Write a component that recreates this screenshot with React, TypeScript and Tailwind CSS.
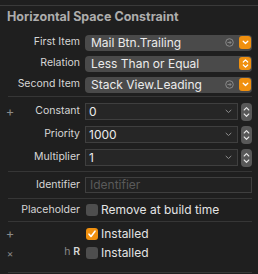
import React from "react";

const Sep = ({ full }: { full?: boolean }) => (
  <div className={full ? "h-px bg-[#3a3a3a]" : "h-px bg-[#363636] ml-[8px] mr-[6px]"} />
);

const CircleArrow = () => (
  <svg width="9" height="9" viewBox="0 0 9 9" className="shrink-0">
    <circle cx="4.5" cy="4.5" r="3.8" fill="none" stroke="#8a8a8a" strokeWidth="1" />
    <path d="M2.5 4.5h3.5M4.6 3l1.5 1.5-1.5 1.5" fill="none" stroke="#8a8a8a" strokeWidth="0.9" />
  </svg>
);

const OrangeDown = () => (
  <div className="w-[12px] h-[13px] rounded-[3px] bg-[#f0900f] flex items-center justify-center shrink-0">
    <svg width="7" height="5" viewBox="0 0 7 5">
      <path d="M1.2 1.3l2.3 2.2 2.3-2.2" fill="none" stroke="#fff" strokeWidth="1.3" strokeLinecap="round" strokeLinejoin="round" />
    </svg>
  </div>
);

const OrangeUpDown = () => (
  <div className="w-[12px] h-[13px] rounded-[3px] bg-[#f0900f] flex items-center justify-center shrink-0">
    <svg width="7" height="11" viewBox="0 0 7 11">
      <path d="M1.3 4l2.2-2.2L5.7 4M1.3 7l2.2 2.2L5.7 7" fill="none" stroke="#fff" strokeWidth="1.2" strokeLinecap="round" strokeLinejoin="round" />
    </svg>
  </div>
);

const Stepper = () => (
  <div className="w-[11px] h-[18px] rounded-[4px] bg-[#585858] flex items-center justify-center ml-[3px] shrink-0">
    <svg width="7" height="14" viewBox="0 0 7 14">
      <path d="M1.2 5l2.3-2.3L5.8 5M1.2 9l2.3 2.3L5.8 9" fill="none" stroke="#e8e8e8" strokeWidth="1.1" strokeLinecap="round" strokeLinejoin="round" />
    </svg>
  </div>
);

const SmallChevron = () => (
  <svg width="7" height="5" viewBox="0 0 7 5" className="shrink-0">
    <path d="M1 1.2l2.5 2.3L6 1.2" fill="none" stroke="#8c8c8c" strokeWidth="1" strokeLinecap="round" strokeLinejoin="round" />
  </svg>
);

const Row = ({
  h,
  icon,
  label,
  children,
}: {
  h: string;
  icon?: React.ReactNode;
  label?: React.ReactNode;
  children: React.ReactNode;
}) => (
  <div className={`flex items-center ${h}`}>
    <div className="w-[80px] relative flex items-center justify-end shrink-0">
      {icon && (
        <div className="absolute left-0 w-[20px] flex justify-center text-[#8a8a8a] text-[13px] leading-none">{icon}</div>
      )}
      <span className="text-[10.5px] text-[#d6d6d6] whitespace-nowrap leading-none">{label}</span>
    </div>
    <div className="ml-[5px] w-[167px] flex items-center">{children}</div>
  </div>
);

const Popup = ({ text, arrow, updown }: { text: string; arrow?: boolean; updown?: boolean }) => (
  <div className="w-full h-[16px] rounded-[4px] bg-[#4a4a4a] flex items-center pl-[6px] pr-[1px] gap-[5px]">
    <span className="flex-1 text-[12px] text-[#ececec] leading-none whitespace-nowrap">{text}</span>
    {arrow && <CircleArrow />}
    {updown ? <OrangeUpDown /> : <OrangeDown />}
  </div>
);

const Field = ({ text }: { text: string }) => (
  <>
    <div className="w-[153px] h-[17px] border border-[#3f3f3f] bg-[#262626] flex items-center pl-[3px] pr-[5px]">
      <span className="flex-1 text-[12px] text-[#ececec] leading-none">{text}</span>
      <SmallChevron />
    </div>
    <Stepper />
  </>
);

const Check = ({ on }: { on?: boolean }) => (
  <div
    className={`w-[12px] h-[12px] rounded-[3px] ml-[1px] shrink-0 flex items-center justify-center ${
      on ? "bg-[#f0900f]" : "bg-[#4e4e4e]"
    }`}
  >
    {on && (
      <svg width="10" height="10" viewBox="0 0 10 10">
        <path d="M2 5.2l2 2.2L8 2.2" fill="none" stroke="#fff" strokeWidth="1.6" strokeLinecap="round" strokeLinejoin="round" />
      </svg>
    )}
  </div>
);

export default function App() {
  return (
    <div
      className="w-[258px] h-[274px] bg-[#1f1f1f] overflow-hidden"
      style={{ fontFamily: "Inter, 'Noto Sans', sans-serif" }}
    >
      <div className="h-[5px]" />
      <Sep full />
      <div className="h-[22px] flex items-center pl-[7px] text-[12.5px] font-bold text-[#adadad] leading-none">
        Horizontal Space Constraint
      </div>
      <div className="h-[4px]" />
      <Row h="h-[21px]" label="First Item">
        <Popup text="Mail Btn.Trailing" arrow />
      </Row>
      <Row h="h-[21px]" label="Relation">
        <Popup text="Less Than or Equal" updown />
      </Row>
      <Row h="h-[21px]" label="Second Item">
        <Popup text="Stack View.Leading" arrow />
      </Row>
      <div className="h-[1px]" />
      <Sep />
      <div className="h-[3px]" />
      <Row h="h-[23px]" icon="+" label="Constant">
        <Field text="0" />
      </Row>
      <Row h="h-[23px]" label="Priority">
        <Field text="1000" />
      </Row>
      <Row h="h-[23px]" label="Multiplier">
        <Field text="1" />
      </Row>
      <div className="h-[2px]" />
      <Sep />
      <Row h="h-[26px]" label="Identifier">
        <div className="w-full h-[16px] border border-[#3f3f3f] bg-[#222222] flex items-center pl-[4px]">
          <span className="text-[12px] text-[#5a5a5a] leading-none">Identifier</span>
        </div>
      </Row>
      <Sep />
      <Row h="h-[22px]" label="Placeholder">
        <Check />
        <span className="ml-[3px] text-[12px] text-[#e4e4e4] leading-none whitespace-nowrap">Remove at build time</span>
      </Row>
      <Sep />
      <div className="h-[2px]" />
      <Row h="h-[19px]" icon="+">
        <Check on />
        <span className="ml-[3px] text-[12px] text-[#e4e4e4] leading-none">Installed</span>
      </Row>
      <Row
        h="h-[19px]"
        icon={<span className="text-[10px] text-[#8a8a8a]">×</span>}
        label={
          <span>
            <span className="text-[#8a8a8a]">h</span>
            <span className="text-[#d6d6d6] font-semibold"> R</span>
          </span>
        }
      >
        <Check />
        <span className="ml-[3px] text-[12px] text-[#e4e4e4] leading-none">Installed</span>
      </Row>
      <div className="h-[10px]" />
      <Sep />
    </div>
  );
}
